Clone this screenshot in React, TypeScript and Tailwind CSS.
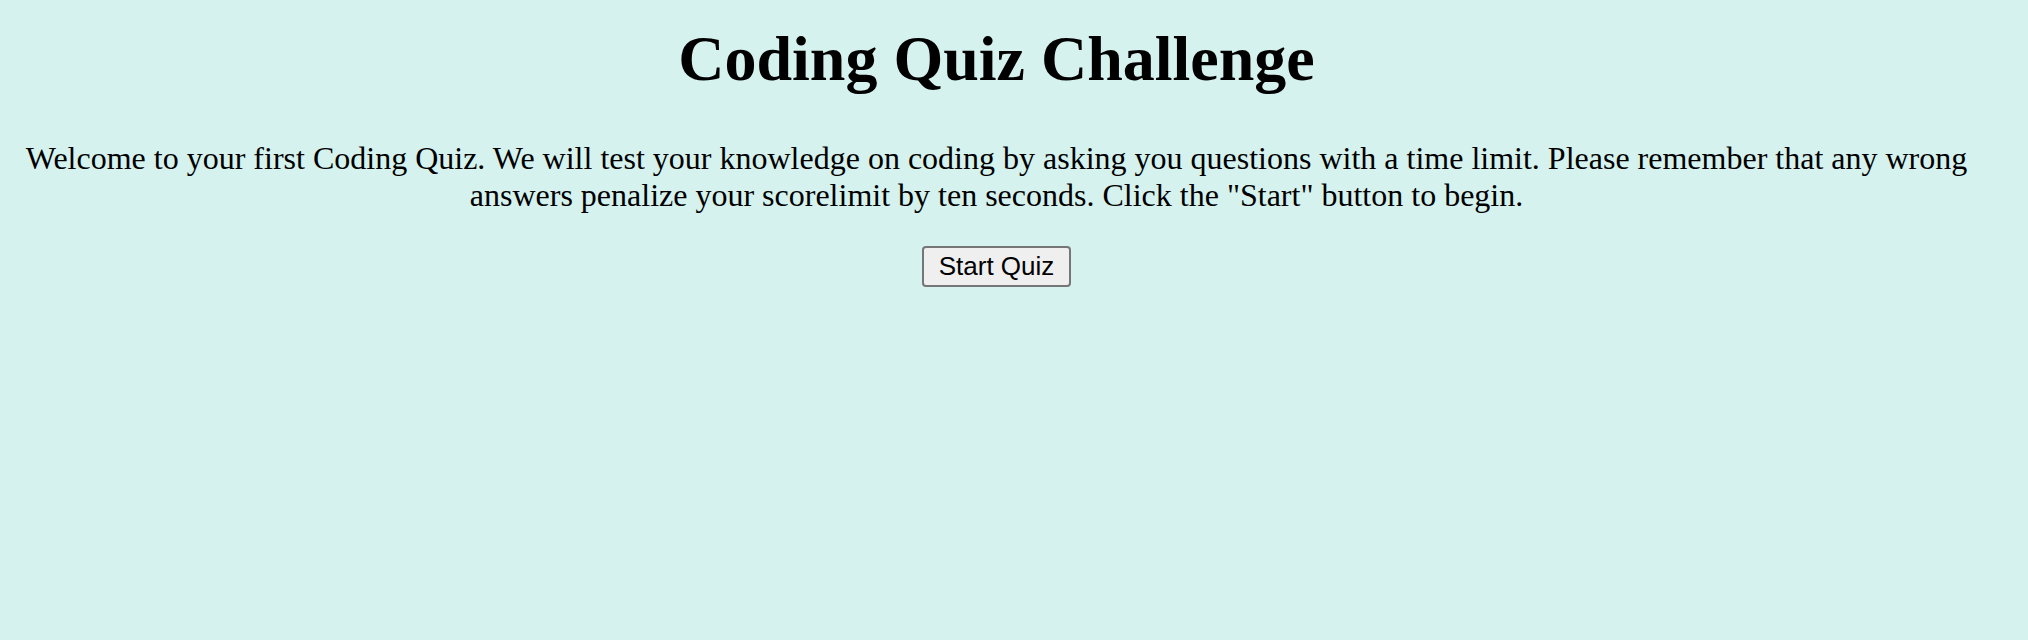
export default function App() {
  return (
    <div className="h-[640px] w-full overflow-hidden bg-[#d5f2ee] pt-[27px] text-black">
      <div className="flex w-[1993px] flex-col items-center text-center">
        <h1 className="font-['Liberation_Serif','Times_New_Roman',serif] text-[64px] font-bold leading-[64px]">
          Coding Quiz Challenge
        </h1>
        <p className="mt-[49px] font-['Liberation_Serif','Times_New_Roman',serif] text-[32px] leading-[37px]">
          Welcome to your first Coding Quiz. We will test your knowledge on coding by asking you questions with a time
          limit. Please remember that any wrong answers penalize your scorelimit by ten seconds. Click the "Start" button
          to begin.
        </p>
        <button
          type="button"
          className="mt-[32px] h-[41px] w-[149px] rounded-[4px] border-2 border-[#767676] bg-[#efefef] font-['Liberation_Sans',Arial,sans-serif] text-[26px] leading-[37px] text-black"
        >
          Start Quiz
        </button>
      </div>
    </div>
  );
}
